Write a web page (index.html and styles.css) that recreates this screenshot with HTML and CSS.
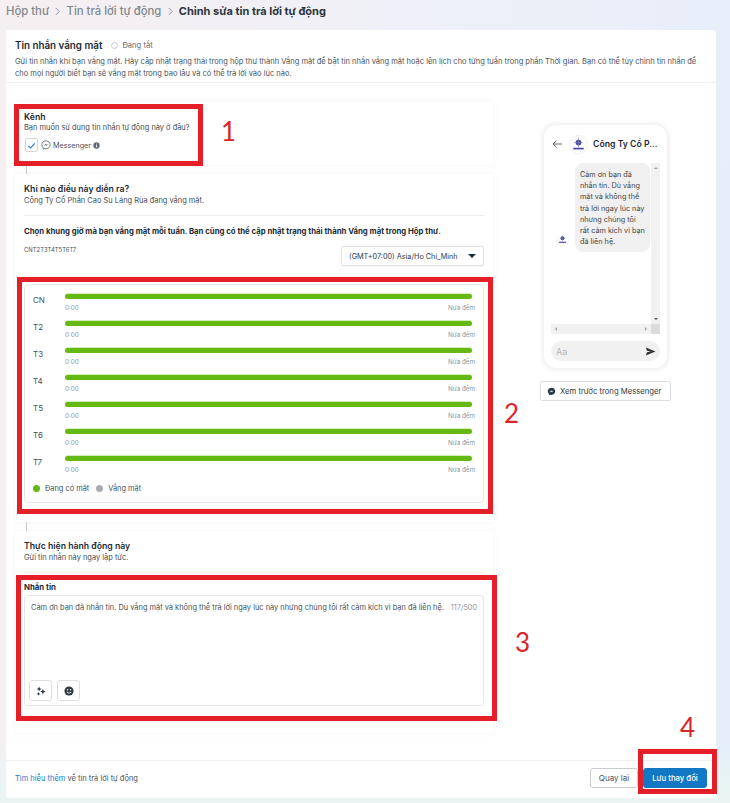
FILE: index.html
```html
<!DOCTYPE html>
<html lang="vi">
<head>
<meta charset="utf-8">
<title>Chỉnh sửa tin trả lời tự động</title>
<link rel="stylesheet" href="styles.css">
</head>
<body>
<nav class="crumbs">
  <span>Hộp thư</span>
  <svg class="crumb-sep" viewBox="0 0 8 10"><path d="M2 1l4 4-4 4"/></svg>
  <span>Tin trả lời tự động</span>
  <svg class="crumb-sep" viewBox="0 0 8 10"><path d="M2 1l4 4-4 4"/></svg>
  <strong>Chỉnh sửa tin trả lời tự động</strong>
</nav>

<main class="page-card">
  <header class="page-head">
    <div class="title-row">
      <h1>Tin nhắn vắng mặt</h1>
      <span class="status-dot"></span>
      <span class="status">Đang tắt</span>
    </div>
    <p>Gửi tin nhắn khi bạn vắng mặt. Hãy cập nhật trạng thái trong hộp thư thành Vắng mặt để bật tin nhắn vắng mặt hoặc lên lịch cho từng tuần trong phần Thời gian. Bạn có thể tùy chỉnh tin nhắn để cho mọi người biết bạn sẽ vắng mặt trong bao lâu và có thể trả lời vào lúc nào.</p>
  </header>

  <div class="content">
    <section class="steps">
      <div class="step step-channel">
        <h2>Kênh</h2>
        <p>Bạn muốn sử dụng tin nhắn tự động này ở đâu?</p>
        <div class="channel-row">
          <span class="check"><svg viewBox="0 0 10 10"><path d="M1.500 5.500l2.500 2.300 4.600-5.200"/></svg></span>
          <svg class="msgr" viewBox="0 0 12 12"><path class="msgr-line" d="M6 1C3 1 1 3.100 1 5.800c0 1.500.6 2.700 1.700 3.600V11l1.500-.8c.5.200 1.100.3 1.800.3 3 0 5-2.100 5-4.700S9 1 6 1z"/><path class="msgr-bolt" d="M3.400 7l2-2.200 1.300 1L8.600 4.800 6.600 7 5.300 6z"/></svg>
          <span>Messenger</span>
          <svg class="info" viewBox="0 0 10 10"><circle cx="5" cy="5" r="4.500"/><rect x="4.400" y="4.400" width="1.300" height="3" fill="#fff"/><rect x="4.400" y="2.400" width="1.300" height="1.200" fill="#fff"/></svg>
        </div>
      </div>
      <div class="connector"></div>
      <div class="step step-when">
        <h2>Khi nào điều này diễn ra?</h2>
        <p>Công Ty Cổ Phần Cao Su Láng Rùa đang vắng mặt.</p>
        <hr>
        <h3>Chọn khung giờ mà bạn vắng mặt mỗi tuần. Bạn cũng có thể cập nhật trạng thái thành Vắng mặt trong Hộp thư.</h3>
        <div class="tz-row">
          <span class="days">CNT2T3T4T5T6T7</span>
          <div class="select"><span>(GMT+07:00) Asia/Ho Chi_Minh</span><i></i></div>
        </div>
        <div class="schedule">
          <div class="day"><span class="day-name">CN</span><div class="day-track"><div class="bar"></div><div class="ends"><span>0:00</span><span>Nửa đêm</span></div></div></div>
          <div class="day"><span class="day-name">T2</span><div class="day-track"><div class="bar"></div><div class="ends"><span>0:00</span><span>Nửa đêm</span></div></div></div>
          <div class="day"><span class="day-name">T3</span><div class="day-track"><div class="bar"></div><div class="ends"><span>0:00</span><span>Nửa đêm</span></div></div></div>
          <div class="day"><span class="day-name">T4</span><div class="day-track"><div class="bar"></div><div class="ends"><span>0:00</span><span>Nửa đêm</span></div></div></div>
          <div class="day"><span class="day-name">T5</span><div class="day-track"><div class="bar"></div><div class="ends"><span>0:00</span><span>Nửa đêm</span></div></div></div>
          <div class="day"><span class="day-name">T6</span><div class="day-track"><div class="bar"></div><div class="ends"><span>0:00</span><span>Nửa đêm</span></div></div></div>
          <div class="day"><span class="day-name">T7</span><div class="day-track"><div class="bar"></div><div class="ends"><span>0:00</span><span>Nửa đêm</span></div></div></div>
          <div class="legend">
            <i class="dot dot-green"></i><span>Đang có mặt</span>
            <i class="dot dot-grey"></i><span>Vắng mặt</span>
          </div>
        </div>
      </div>
      <div class="connector"></div>
      <div class="step step-action">
        <h2>Thực hiện hành động này</h2>
        <p>Gửi tin nhắn này ngay lập tức.</p>
        <hr>
        <h4>Nhắn tin</h4>
        <div class="composer">
          <div class="composer-text">
            <span>Cảm ơn bạn đã nhắn tin. Dù vắng mặt và không thể trả lời ngay lúc này nhưng chúng tôi rất cảm kích vì bạn đã liên hệ.</span>
            <span class="count">117/500</span>
          </div>
          <div class="tools">
            <button class="tool" type="button" aria-label="Cá nhân hóa"><svg viewBox="0 0 12 12"><path d="M3.800.6l.9 2.100 2.100.9-2.100.9-.9 2.100-.9-2.100-2.100-.9 2.100-.9zM8.300 3.300l1 2.400 2.400 1-2.400 1-1 2.400-1-2.400-2.400-1 2.400-1zM3 7.200l.7 1.600 1.600.7-1.600.7L3 11.800l-.7-1.600-1.600-.7 1.600-.7z"/></svg></button>
            <button class="tool" type="button" aria-label="Biểu tượng cảm xúc"><svg viewBox="0 0 12 12"><circle cx="6" cy="6" r="5.500"/><circle cx="4.200" cy="4.600" r=".9" fill="#fff"/><circle cx="7.800" cy="4.600" r=".9" fill="#fff"/><path d="M3.300 7.300q2.700 2.600 5.400 0" fill="none" stroke="#fff"/></svg></button>
          </div>
        </div>
      </div>
    </section>

    <aside class="preview">
      <div class="phone">
        <div class="phone-head">
          <svg class="back" viewBox="0 0 12 10"><path d="M11 5H1.500M5 1.200L1.200 5 5 8.800"/></svg>
          <svg class="logo logo-big" viewBox="0 0 20 20"><circle cx="10" cy="10" r="9.700" fill="#fff" stroke="#e2e2e8" stroke-width=".5"/><circle cx="10" cy="8" r="3" fill="#4b4aa6"/><path d="M10 2.800v10.200M5.500 8h9" stroke="#7a7ac0" stroke-width=".7"/><rect x="4.500" y="13.400" width="11" height="1.800" fill="#4b4aa6"/></svg>
          <b>Công Ty Cổ P...</b>
        </div>
        <div class="phone-body">
          <div class="thread">
            <div class="msg-area">
              <svg class="logo logo-small" viewBox="0 0 20 20"><circle cx="10" cy="10" r="9.700" fill="#fff" stroke="#e2e2e8" stroke-width=".5"/><circle cx="10" cy="8" r="3" fill="#4b4aa6"/><path d="M10 2.800v10.200M5.500 8h9" stroke="#7a7ac0" stroke-width=".7"/><rect x="4.500" y="13.400" width="11" height="1.800" fill="#4b4aa6"/></svg>
              <div class="bubble">Cảm ơn bạn đã nhắn tin. Dù vắng mặt và không thể trả lời ngay lúc này nhưng chúng tôi rất cảm kích vì bạn đã liên hệ.</div>
            </div>
            <div class="vscroll"><i class="arr-up"></i><i class="arr-down"></i></div>
          </div>
          <div class="hscroll"><i class="arr-left"></i><i class="arr-right"></i><span class="corner"></span></div>
        </div>
        <div class="phone-input">
          <span>Aa</span>
          <svg viewBox="0 0 12 10"><path d="M.8.500L11.500 5 .8 9.500l1.200-3.600L6.500 5 2 4.100z"/></svg>
        </div>
      </div>
      <button class="preview-btn" type="button">
        <svg viewBox="0 0 12 12"><path d="M6 1C3 1 1 3.100 1 5.800c0 1.500.6 2.700 1.700 3.600V11l1.500-.8c.5.200 1.100.3 1.800.3 3 0 5-2.100 5-4.700S9 1 6 1z"/><path d="M3.400 7l2-2.200 1.300 1L8.600 4.800 6.600 7 5.300 6z" fill="#fff"/></svg>
        Xem trước trong Messenger
      </button>
    </aside>
  </div>

  <footer class="page-foot">
    <div class="learn"><a href="#">Tìm hiểu thêm</a> về tin trả lời tự động</div>
    <div class="actions">
      <button class="btn" type="button">Quay lại</button>
      <button class="btn btn-primary" type="button">Lưu thay đổi</button>
    </div>
  </footer>
</main>

<div class="mark mark-1"></div>
<div class="mark mark-2"></div>
<div class="mark mark-3"></div>
<div class="mark mark-4"></div>
<span class="num num-1">1</span>
<span class="num num-2">2</span>
<span class="num num-3">3</span>
<span class="num num-4">4</span>
</body>
</html>
```

FILE: styles.css
```css
* { box-sizing: border-box; }
html, body { margin: 0; height: 803px; overflow: hidden; }
body {
  position: relative;
  padding: 0 14px 5px 6px;
  display: flex;
  flex-direction: column;
  font-family: "Inter", "Roboto", sans-serif;
  color: #1c2b33;
  background:
    linear-gradient(180deg, rgba(234,245,243,0) 740px, #e9f4f3 790px),
    linear-gradient(100deg, #f6eff1 0%, #eff0f7 45%, #e5eefa 100%);
}
p, h1, h2, h3, h4 { margin: 0; }
button { font-family: inherit; }

.crumbs {
  height: 30px;
  padding-bottom: 8px;
  display: flex;
  align-items: center;
  gap: 5.250px;
  font-size: 11.300px;
  font-weight: 500;
  color: #7f8890;
}
.crumbs strong { font-size: 11px; font-weight: 700; color: #2b353c; }
.crumb-sep { width: 7px; height: 9px; fill: none; stroke: #7f8890; stroke-width: 1; }

.page-card {
  flex: 1;
  display: flex;
  flex-direction: column;
  background: #fff;
  border-radius: 3px;
  min-height: 0;
}
.page-head {
  height: 53px;
  padding: 8px 14px 0 9px;
  border-bottom: 1px solid #eff0f1;
}
.title-row { display: flex; align-items: center; height: 15px; }
.title-row h1 { font-size: 9.800px; font-weight: 600; color: #1c2b33; white-space: nowrap; }
.status-dot { width: 7px; height: 7px; margin-left: 9px; border-radius: 50%; border: 1px solid #c4cacf; }
.status { margin-left: 4px; font-size: 7.600px; color: #5f6a72; }
.page-head p { margin-top: 3px; font-size: 7.510px; line-height: 12px; color: #48525a; }

.content { flex: 1; display: flex; padding: 19px 0 0 9px; min-height: 0; }
.steps { width: 478px; flex: none; }
.step {
  background: #fff;
  box-shadow: 0 0 6px rgba(120, 120, 190, .09);
  padding: 0 9px;
}
.step h2 { font-size: 8.700px; font-weight: 600; color: #1c2b33; line-height: 11px; }
.step > p { font-size: 7.450px; line-height: 10px; color: #434d55; }
.step hr { border: 0; border-top: 1px solid #eceef0; margin: 0; }
.connector { width: 1px; height: 9px; margin-left: 11px; background: #c9ccd0; }

.step-channel { height: 63px; padding-top: 10px; }
.channel-row { display: flex; align-items: center; margin-top: 5px; font-size: 7.200px; color: #48525a; }
.check {
  width: 13px; height: 14px;
  margin-left: 1px;
  border: 1px solid #d5d8db;
  border-radius: 2px;
  display: flex; align-items: center; justify-content: center;
}
.check svg { width: 9px; height: 9px; fill: none; stroke: #1877c9; stroke-width: 1.200; }
.msgr { width: 10px; height: 10px; margin: 0 2px 0 3px; }
.msgr-line { fill: none; stroke: #48525a; stroke-width: .9; }
.msgr-bolt { fill: #48525a; }
.info { width: 7px; height: 7px; margin-left: 2px; fill: #5f6a72; }

.step-when { height: 348px; padding-top: 10px; }
.step-when > p { margin-top: 1px; }
.step-when hr { margin-top: 9px; }
.step-when h3 { margin-top: 10px; font-size: 7.770px; font-weight: 700; line-height: 10px; color: #1c2b33; white-space: nowrap; }
.tz-row { display: flex; justify-content: space-between; align-items: flex-start; height: 43px; margin-top: 5px; }
.days { font-size: 5.900px; margin-top: 5px; color: #48525a; }
.select {
  width: 143px; height: 20px;
  margin-top: 5px;
  padding: 0 7px;
  border: 1px solid #dfe1e4;
  border-radius: 2px;
  display: flex; align-items: center; justify-content: space-between;
  font-size: 7.250px;
  color: #2f3a42;
  box-shadow: 0 1px 1px rgba(0, 0, 0, .04);
}
.select i { width: 0; height: 0; border: 4px solid transparent; border-top: 4px solid #1c2b33; border-bottom: 0; }

.schedule {
  height: 219px;
  padding: 9px 8px 0 8px;
  border: 1px solid #e6e7e9;
  border-radius: 4px;
}
.day { display: flex; height: 27px; }
.day-name { width: 32px; flex: none; padding-top: 1px; font-size: 8px; line-height: 11px; color: #48525a; }
.day-track { flex: 1; }
.bar {
  height: 5px;
  border-radius: 3px;
  background: #64ba12;
  margin-right: 3px;
  box-shadow: 0 -1px 0 #d4efb8;
}
.ends { display: flex; justify-content: space-between; margin-top: 5px; font-size: 6.300px; line-height: 8px; color: #8b949b; }
.legend { display: flex; align-items: center; margin-top: -2px; height: 14px; font-size: 7.400px; color: #48525a; }
.dot { width: 7px; height: 7px; border-radius: 50%; margin-right: 5px; }
.dot-green { background: #64ba12; }
.dot-grey { background: #a8abad; margin-left: 7px; }

.step-action { height: 202px; padding-top: 10px; }
.step-action > p { margin-top: 1px; }
.step-action hr { margin-top: 9px; }
.step-action h4 { margin-top: 9px; font-size: 7.800px; font-weight: 700; line-height: 11px; }
.composer {
  height: 111px;
  margin-top: 2px;
  padding: 7px 6px 4px 4px;
  border: 1px solid #e6e7e9;
  border-radius: 3px;
  display: flex; flex-direction: column; justify-content: space-between;
}
.composer-text { display: flex; justify-content: space-between; padding: 0 0 0 2px; font-size: 7.430px; line-height: 10px; color: #48525a; white-space: nowrap; }
.count { font-size: 7.250px; color: #8b949b; }
.tools { display: flex; gap: 5px; }
.tool {
  width: 23px; height: 21px; padding: 0;
  background: #fff;
  border: 1px solid #dcdee0;
  border-radius: 3px;
  display: flex; align-items: center; justify-content: center;
}
.tool svg { width: 10px; height: 10px; fill: #2f3a42; }

.preview {
  flex: 1;
  display: flex; flex-direction: column; align-items: center;
  padding: 23px 45px 0 47px;
}
.phone {
  width: 123px; height: 243px;
  flex: none;
  padding: 0 7px;
  border-radius: 12px;
  background: #fff;
  box-shadow: 0 0 6px rgba(90, 90, 120, .18);
}
.phone-head { height: 38px; display: flex; align-items: center; gap: 5px; }
.back { width: 11px; height: 10px; fill: none; stroke: #444; stroke-width: .9; margin-left: 1px; flex: none; }
.logo-big { width: 19px; height: 19px; flex: none; margin-left: 1px; }
.phone-head b { font-size: 8.700px; font-weight: 600; white-space: nowrap; }
.phone-body { height: 171px; }
.thread { height: 161px; display: flex; }
.msg-area { flex: 1; display: flex; align-items: flex-end; align-self: flex-start; gap: 6px; padding-left: 5px; }
.logo-small { width: 13px; height: 13px; flex: none; margin-bottom: 6px; }
.bubble {
  width: 75px;
  padding: 6px 5px 5px;
  border-radius: 8px;
  background: #f0f0f0;
  font-size: 7.250px;
  line-height: 11.200px;
  color: #444;
}
.vscroll { width: 9px; flex: none; background: #f1f1f1; position: relative; }
.hscroll { height: 10px; background: #f1f1f1; position: relative; }
.arr-up, .arr-down, .arr-left, .arr-right { position: absolute; width: 0; height: 0; border: 2px solid transparent; }
.arr-up { top: 4px; left: 2.500px; border-bottom-color: #a3a3a3; border-top: 0; }
.arr-down { bottom: 4px; left: 2.500px; border-top-color: #505050; border-bottom: 0; }
.arr-left { left: 4px; top: 3px; border-right-color: #a3a3a3; border-left: 0; }
.arr-right { right: 13px; top: 3px; border-left-color: #a3a3a3; border-right: 0; }
.corner { position: absolute; right: 0; top: 0; width: 9px; height: 10px; background: #dcdcdc; }
.phone-input {
  height: 20px;
  margin-top: 7px;
  padding: 0 4px 0 5px;
  border-radius: 10px;
  background: #f1f1f1;
  display: flex; align-items: center; justify-content: space-between;
  font-size: 9px;
  color: #b5b5b5;
}
.phone-input svg { width: 11px; height: 9px; fill: #333; }
.preview-btn {
  width: 131px; height: 20px;
  flex: none;
  margin-top: 13px;
  padding: 0 0 0 6px;
  background: #fff;
  border: 1px solid #dcdee0;
  border-radius: 2px;
  display: flex; align-items: center; gap: 4px;
  font-size: 7.700px;
  color: #2f3a42;
  white-space: nowrap;
}
.preview-btn svg { width: 9px; height: 9px; fill: #2f3a42; flex: none; }

.page-foot {
  height: 38px;
  flex: none;
  padding: 7px 9px 0;
  border-top: 1px solid #eff0f1;
  display: flex; justify-content: space-between;
}
.learn { font-size: 7.500px; line-height: 21px; color: #48525a; }
.learn a { color: #1877c9; text-decoration: none; }
.actions { display: flex; gap: 5px; }
.btn {
  height: 20px; width: 48px; padding: 0;
  background: #fff;
  border: 1px solid #c8ccd0;
  border-radius: 3px;
  font-size: 8px;
  color: #48525a;
}
.btn-primary { width: 64px; font-size: 7.750px; background: #1277c5; border-color: #1277c5; color: #fff; font-weight: 500; }

.mark { position: absolute; border: 5px solid #e51f27; }
.mark-1 { left: 14px; top: 104px; width: 189px; height: 62px; }
.mark-2 { left: 17px; top: 277px; width: 476px; height: 237px; }
.mark-3 { left: 16px; top: 575px; width: 481px; height: 146px; }
.mark-4 { left: 638px; top: 749px; width: 79px; height: 45px; }
.num { position: absolute; font-family: "Lato", sans-serif; font-size: 26px; line-height: 30px; color: #d9252b; }
.num-1 { left: 221px; top: 116px; }
.num-2 { left: 504px; top: 398px; }
.num-3 { left: 515px; top: 627px; }
.num-4 { left: 680px; top: 712px; }
```
